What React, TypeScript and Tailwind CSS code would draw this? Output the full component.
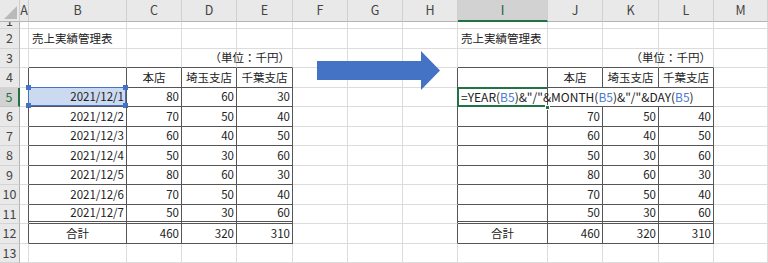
import React from 'react';

const COLS = ['A', 'B', 'C', 'D', 'E', 'F', 'G', 'H', 'I', 'J', 'K', 'L', 'M'];
const ROWS = [1, 2, 3, 4, 5, 6, 7, 8, 9, 10, 11, 12, 13];

type Align = 'left' | 'right' | 'center';
type CellData = { text: string; align?: Align };

const dates = ['2021/12/1', '2021/12/2', '2021/12/3', '2021/12/4', '2021/12/5', '2021/12/6', '2021/12/7'];
const honten = [80, 70, 60, 50, 80, 70, 50];
const saitama = [60, 50, 40, 30, 60, 50, 30];
const chiba = [30, 40, 50, 60, 30, 40, 60];

// sheet contents keyed by "B5" style addresses
const cells: Record<string, CellData> = {
  B2: { text: '売上実績管理表' },
  E3: { text: '（単位：千円）', align: 'right' },
  C4: { text: '本店', align: 'center' },
  D4: { text: '埼玉支店', align: 'center' },
  E4: { text: '千葉支店', align: 'center' },
  B12: { text: '合計', align: 'center' },
  C12: { text: '460', align: 'right' },
  D12: { text: '320', align: 'right' },
  E12: { text: '310', align: 'right' },
  I2: { text: '売上実績管理表' },
  L3: { text: '（単位：千円）', align: 'right' },
  J4: { text: '本店', align: 'center' },
  K4: { text: '埼玉支店', align: 'center' },
  L4: { text: '千葉支店', align: 'center' },
  I12: { text: '合計', align: 'center' },
  J12: { text: '460', align: 'right' },
  K12: { text: '320', align: 'right' },
  L12: { text: '310', align: 'right' },
};

dates.forEach((d, i) => {
  const r = i + 5;
  cells[`B${r}`] = { text: d, align: 'right' };
  cells[`C${r}`] = { text: String(honten[i]), align: 'right' };
  cells[`D${r}`] = { text: String(saitama[i]), align: 'right' };
  cells[`E${r}`] = { text: String(chiba[i]), align: 'right' };
  if (r > 5) {
    cells[`J${r}`] = { text: String(honten[i]), align: 'right' };
    cells[`K${r}`] = { text: String(saitama[i]), align: 'right' };
    cells[`L${r}`] = { text: String(chiba[i]), align: 'right' };
  }
});

const inTable = (col: string, row: number) => {
  if (row < 4 || row > 12) return false;
  return ['B', 'C', 'D', 'E', 'I', 'J', 'K', 'L'].includes(col);
};

const nextCol = (col: string) => COLS[COLS.indexOf(col) + 1] ?? '';

const alignClass = (a?: Align) =>
  a === 'right' ? 'justify-end pr-[2px]' : a === 'center' ? 'justify-center' : 'justify-start pl-[3px]';

const Formula = () => (
  <span className="text-[12px] text-[#222]">
    =YEAR(<span className="text-[#4a7bd0]">B5</span>)&amp;"/"&amp;MONTH(
    <span className="text-[#4a7bd0]">B5</span>)&amp;"/"&amp;DAY(<span className="text-[#4a7bd0]">B5</span>)
  </span>
);

const Cell: React.FC<{ col: string; row: number }> = ({ col, row }) => {
  const addr = `${col}${row}`;
  const data = cells[addr];

  const darkRight = inTable(col, row) || inTable(nextCol(col), row);
  const hideRight = row === 5 && (col === 'J' || col === 'K');
  let right = 'border-r border-r-[#dcdcdc]';
  if (darkRight) right = 'border-r border-r-[#555]';
  if (hideRight) right = '';

  let bottom = 'border-b border-b-[#dcdcdc]';
  if (inTable(col, row) || inTable(col, row + 1)) bottom = 'border-b border-b-[#555]';
  if (inTable(col, row) && row === 11) bottom = 'border-b-[3px] border-double border-b-[#555]';

  const selected = addr === 'B5';
  const active = addr === 'I5';

  return (
    <div
      className={`relative flex items-center whitespace-nowrap ${right} ${bottom} ${alignClass(data?.align)} ${
        selected ? 'bg-[#cbdaf1]' : ''
      } ${active ? 'z-10 overflow-visible' : 'overflow-visible'}`}
    >
      {active ? <Formula /> : data && <span className="text-[11.5px] text-[#222]">{data.text}</span>}
      {selected && (
        <>
          <div className="absolute -left-px -top-px right-0 bottom-0 border border-[#4472c4]" />
          <span className="absolute -left-[3px] -top-[3px] h-[5px] w-[5px] bg-[#4472c4]" />
          <span className="absolute -right-[2px] -top-[3px] h-[5px] w-[5px] bg-[#4472c4]" />
          <span className="absolute -left-[3px] -bottom-[2px] h-[5px] w-[5px] bg-[#4472c4]" />
          <span className="absolute -right-[2px] -bottom-[2px] h-[5px] w-[5px] bg-[#4472c4]" />
        </>
      )}
      {active && (
        <>
          {/* editing cell: open on the right while the text spills over */}
          <div className="absolute -left-px -top-px right-0 -bottom-px border-2 border-r-0 border-[#217346]" />
          <span className="absolute -right-[3px] -bottom-[4px] h-[5px] w-[5px] border border-white bg-[#217346]" />
        </>
      )}
    </div>
  );
};

const ColHeader: React.FC<{ col: string }> = ({ col }) => {
  const on = col === 'I';
  return (
    <div
      className={`flex items-center justify-center text-[12.5px] ${
        on
          ? 'border-b-2 border-b-[#217346] bg-[#d2d2d2] text-[#1d5c38]'
          : 'border-b border-b-[#b4b4b4] bg-[#e9e9e9] text-[#444]'
      } border-r border-r-[#cfcfcf]`}
    >
      {col}
    </div>
  );
};

const RowHeader: React.FC<{ row: number }> = ({ row }) => {
  const on = row === 5;
  if (row === 1) {
    return (
      <div className="flex items-start justify-center overflow-hidden border-r border-b border-r-[#b4b4b4] border-b-[#d4d4d4] bg-[#e9e9e9] text-[12.5px] text-[#444]">
        <span className="-mt-[7px] leading-[12px]">1</span>
      </div>
    );
  }
  return (
    <div
      className={`flex items-center justify-center border-b text-[12.5px] ${
        on
          ? 'border-r-2 border-r-[#217346] border-b-[#c4c4c4] bg-[#d2d2d2] text-[#217346]'
          : 'border-r border-r-[#b4b4b4] border-b-[#d4d4d4] bg-[#e9e9e9] text-[#444]'
      }`}
    >
      {row}
    </div>
  );
};

export default function App() {
  return (
    <div
      className="relative h-[263px] w-[768px] overflow-hidden bg-white"
      style={{ fontFamily: '"Noto Sans CJK JP", "Noto Sans", sans-serif' }}
    >
      <div className="grid grid-cols-[20px_9px_98px_55px_55px_56px_55px_55px_55px_90px_55px_56px_55px_54px] grid-rows-[22px_7px_20px_19px_20px_19px_20px_19px_20px_19px_20px_19px_20px_19px]">
        {/* select-all corner */}
        <div className="relative border-r border-b border-r-[#cfcfcf] border-b-[#b4b4b4] bg-[#e9e9e9]">
          <svg className="absolute right-[2px] bottom-[2px]" width="13" height="13" viewBox="0 0 13 13">
            <polygon points="13,0 13,13 0,13" fill="#b9b9b9" />
          </svg>
        </div>
        {COLS.map((c) => (
          <ColHeader key={c} col={c} />
        ))}
        {ROWS.map((r) => (
          <React.Fragment key={r}>
            <RowHeader row={r} />
            {COLS.map((c) => (
              <Cell key={c + r} col={c} row={r} />
            ))}
          </React.Fragment>
        ))}
      </div>

      {/* block arrow shape sitting on the sheet */}
      <svg className="absolute left-[317px] top-[51px]" width="124" height="39" viewBox="0 0 124 39">
        <polygon points="0,10 104,10 104,0 123,19.5 104,39 104,29 0,29" fill="#4472c4" />
      </svg>
    </div>
  );
}
